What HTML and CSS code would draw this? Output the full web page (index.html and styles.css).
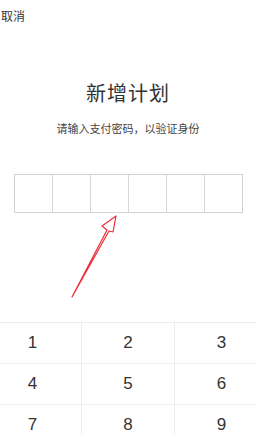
FILE: index.html
```html
<!DOCTYPE html>
<html lang="zh-CN">
  <head>
    <meta charset="UTF-8" />
    <meta name="viewport" content="width=device-width, initial-scale=1.0" />
    <title>新增计划</title>
    <link rel="stylesheet" href="styles.css">
  </head>
  <body>
    <div class="page">
      <div class="top-bar">
        <a href="#" class="cancel">取消</a>
      </div>
      <h2 class="title">新增计划</h2>
      <p class="tip">请输入支付密码，以验证身份</p>
      <div class="pwd-box">
        <span></span><span></span><span></span><span></span><span></span><span></span>
      </div>

      <svg class="arrow" width="256" height="434" viewBox="0 0 256 434">
        <polygon points="72,297 107,230 102,226 116,216 113,232 109,231" fill="none" stroke="#ec2d3a" stroke-width="1.2" stroke-linejoin="round" />
      </svg>

      <div class="keypad">
        <button class="key left">1</button>
        <button class="key">2</button>
        <button class="key right">3</button>
        <button class="key left">4</button>
        <button class="key">5</button>
        <button class="key right">6</button>
        <button class="key left">7</button>
        <button class="key">8</button>
        <button class="key right">9</button>
      </div>
    </div>
  </body>
</html>
```

FILE: styles.css
```css
body {
  margin: 0;
  padding: 0;
  background-color: #ffffff;
  font-family: "Noto Sans CJK SC", "Noto Sans", sans-serif;
  color: #333333;
}
.page {
  position: relative;
  width: 256px;
  height: 434px;
  overflow: hidden;
}
.top-bar {
  padding: 9px 0 0 1px;
  height: 14px;
}
.cancel {
  font-size: 12px;
  line-height: 14px;
  color: #333333;
  text-decoration: none;
  display: block;
}
.title {
  margin: 58px 0 0 0;
  font-size: 20px;
  line-height: 24px;
  font-weight: normal;
  text-align: center;
  color: #333333;
  letter-spacing: 1px;
}
.tip {
  margin: 16px 0 0 0;
  font-size: 11px;
  line-height: 14px;
  text-align: center;
  color: #444444;
}
.pwd-box {
  margin: 39px 0 0 14px;
  width: 227px;
  height: 37px;
  border: 1px solid #d2d2d2;
  display: flex;
}
.pwd-box span {
  flex: 1;
  border-left: 1px solid #d8d8d8;
}
.pwd-box span:first-child {
  border-left: none;
}
.arrow {
  position: absolute;
  left: 0;
  top: 0;
  pointer-events: none;
}
.keypad {
  margin-top: 109px;
  display: grid;
  grid-template-columns: 82px 93px 81px;
  border-top: 1px solid #ededed;
}
.key {
  height: 41px;
  border: none;
  border-bottom: 1px solid #ededed;
  border-right: 1px solid #ededed;
  background: #ffffff;
  font-family: "Liberation Sans", Arial, sans-serif;
  font-size: 17px;
  color: #333333;
  padding: 0;
  cursor: pointer;
}
.key.left {
  padding-right: 16px;
}
.key.right {
  border-right: none;
  padding-left: 12px;
}
```
